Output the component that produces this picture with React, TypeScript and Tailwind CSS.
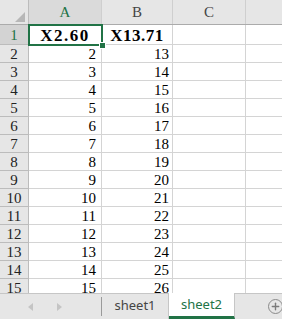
import { Plus } from 'lucide-react';

// 시트 데이터: A열 / B열
const rows = Array.from({ length: 15 }, (_, i) => {
  const n = i + 1;
  if (n === 1) return { n, a: 'X2.60', b: 'X13.71', bold: true };
  return { n, a: String(n), b: String(n + 11), bold: false };
});

const cols = ['A', 'B', 'C', 'D'];
const grid = 'grid grid-cols-[29px_73px_71px_73px_1fr]';
const serif = "[font-family:'Liberation_Serif',serif]";

export default function App() {
  return (
    <div className="w-[282px] h-[319px] overflow-hidden flex flex-col bg-white">
      {/* Grid */}
      <div className="flex-1 overflow-hidden relative">
        {/* Column headers */}
        <div className={`${grid} h-[25px] bg-[#e6e6e6] border-b border-[#ababab]`}>
          <div className="relative border-r border-[#bcbcbc]">
            <div className="absolute right-[3px] bottom-[2px] w-0 h-0 border-l-[10px] border-l-transparent border-b-[10px] border-b-[#b7b7b7]" />
          </div>
          {cols.map((c) => (
            <div
              key={c}
              className={`flex items-center justify-center pt-[1px] text-[15px] leading-none ${serif} ${
                c === 'A' ? 'text-[#217346] bg-[#dadada]' : 'text-[#444]'
              } ${c === 'D' ? 'pl-[66px]' : 'border-r border-[#cfcfcf]'}`}
            >
              {c}
            </div>
          ))}
        </div>

        {rows.map((r) => (
          <div key={r.n} className={`${grid} ${r.bold ? 'h-[20px]' : 'h-[18px]'}`}>
            <div
              className={`flex items-center justify-center text-[15px] leading-none ${serif} border-b border-r border-[#bcbcbc] ${
                r.bold ? 'bg-[#d3d3d3] text-[#217346] pt-[2px]' : 'bg-[#e6e6e6] text-[#222] pt-[1px]'
              }`}
            >
              {r.n}
            </div>
            <div
              className={`flex items-center border-b border-r border-[#d4d4d4] leading-none text-black ${serif} ${
                r.bold
                  ? 'justify-center font-bold text-[17px] tracking-[1.5px] pt-[1px]'
                  : 'justify-end pr-[5px] text-[15px] pt-[1px]'
              }`}
            >
              {r.a}
            </div>
            <div
              className={`flex items-center border-b border-r border-[#d4d4d4] leading-none text-black ${serif} ${
                r.bold
                  ? 'justify-center font-bold text-[17px] tracking-[0.5px] pt-[1px]'
                  : 'justify-end pr-[3px] text-[15px] pt-[1px]'
              }`}
            >
              {r.b}
            </div>
            <div className="border-b border-r border-[#d4d4d4]" />
            <div className="border-b border-[#d4d4d4]" />
          </div>
        ))}

        {/* Selected cell A1 */}
        <div className="absolute left-[28px] top-[24px] w-[75px] h-[22px] border-2 border-[#217346]" />
        <div className="absolute left-[99px] top-[42px] w-[7px] h-[7px] bg-[#217346] border border-white" />
      </div>

      {/* Sheet tabs */}
      <div className="h-[26px] flex items-stretch bg-[#e6e6e6] border-t border-[#c6c6c6] text-[13px] [font-family:'Noto_Sans',sans-serif]">
        <div className="w-[101px] flex items-center gap-[24px] pl-[28px]">
          <div className="w-0 h-0 border-y-[4px] border-y-transparent border-r-[5px] border-r-[#c4c4c4]" />
          <div className="w-0 h-0 border-y-[4px] border-y-transparent border-l-[5px] border-l-[#c4c4c4]" />
        </div>
        <div className="my-[3px] border-l border-[#9a9a9a]" />
        <div className="w-[67px] flex items-center justify-center text-[#444] pb-[2px] border-r border-[#c6c6c6]">
          sheet1
        </div>
        <div className="w-[66px] -mt-px flex items-center justify-center bg-white text-[#217346] border-b-[3px] border-[#217346] border-r border-r-[#c6c6c6]">
          sheet2
        </div>
        <div className="flex-1 flex items-center justify-end">
          <div className="w-[15px] h-[15px] -mr-[1px] rounded-full border border-[#8a8a8a] flex items-center justify-center">
            <Plus className="w-[11px] h-[11px] text-[#7a7a7a]" strokeWidth={3} />
          </div>
        </div>
      </div>
    </div>
  );
}
